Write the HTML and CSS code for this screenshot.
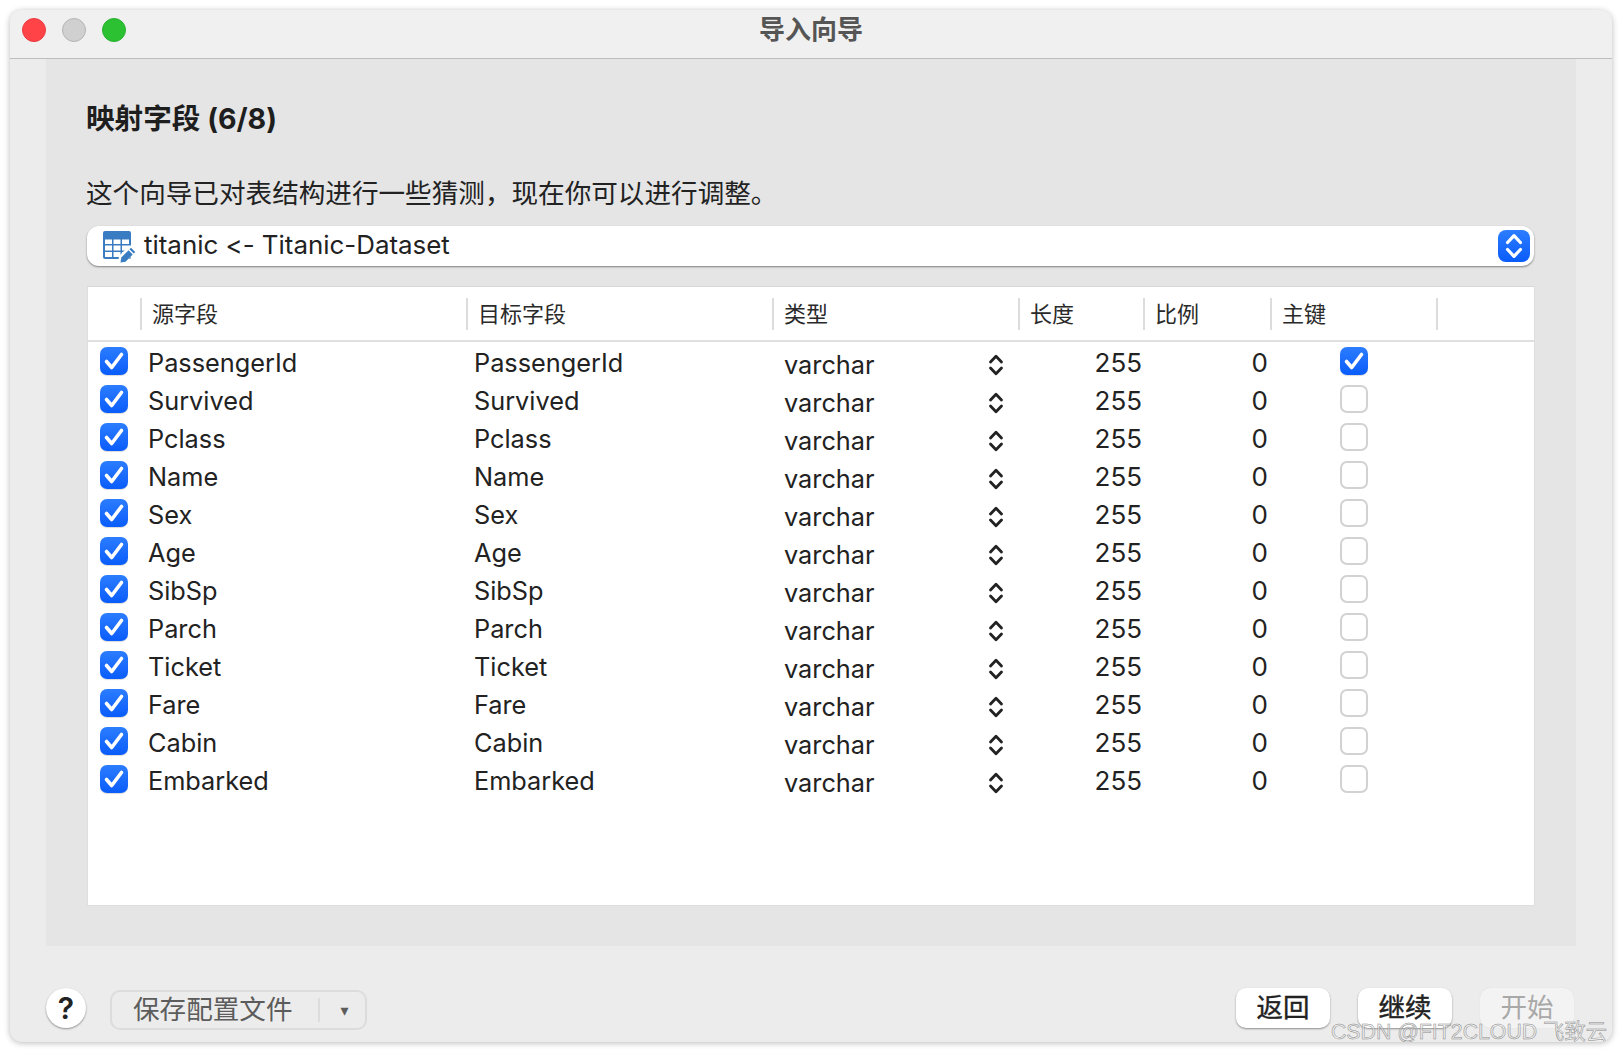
FILE: index.html
```html
<!DOCTYPE html>
<html lang="zh-CN">
<head>
<meta charset="utf-8">
<title>导入向导</title>
<link rel="stylesheet" href="styles.css">
</head>
<body>
<svg class="defs" width="0" height="0" aria-hidden="true">
  <symbol id="tick" viewBox="0 0 28 28"><path d="M6.500 14.500l5.200 6L21.500 7.500" fill="none" stroke="#fff" stroke-width="3.600" stroke-linecap="round" stroke-linejoin="round"/></symbol>
  <symbol id="updown" viewBox="0 0 16 24"><path d="M2.500 9L8 3.200 13.500 9M2.500 15L8 20.800 13.500 15" fill="none" stroke="currentColor" stroke-width="2.800" stroke-linecap="round" stroke-linejoin="round"/></symbol>
</svg>
<div class="window">
  <header class="titlebar">
    <div class="lights"><i class="light red"></i><i class="light grey"></i><i class="light green"></i></div>
    <div class="wintitle">导入向导</div>
  </header>
  <main class="panel">
    <h1 class="heading">映射字段 (6/8)</h1>
    <p class="intro">这个向导已对表结构进行一些猜测，现在你可以进行调整。</p>
    <div class="select">
      <svg class="tableicon" width="32" height="32" viewBox="0 0 32 32">
        <rect x="0" y="0" width="28" height="28" rx="2" fill="#3a7cc2"/>
        <path d="M2 8.500h7v4.500H2zM10.500 8.500h7v4.500h-7zM19 8.500h7v4.500h-7zM2 14.500h7v5H2zM10.500 14.500h7v5h-7zM19 14.500h7v5h-7zM2 21h7v5H2zM10.500 21h7v5h-7zM19 21h7v5h-7z" fill="#fff"/>
        <path d="M15 33l1-8L27 14l6 6-11 12z" fill="#fff"/>
        <path d="M17.500 31.500l.8-5 7.200-7.200 4.200 4.200-7.200 7.200zM26.500 18.300l1.500-1.500 4.200 4.200-1.500 1.500z" fill="#3a7cc2"/>
      </svg>
      <span class="selecttext">titanic &lt;- Titanic-Dataset</span>
      <span class="stepper"><svg width="22" height="28" viewBox="0 0 16 24"><use href="#updown"/></svg></span>
    </div>
    <section class="table">
      <div class="thead">
        <div class="th"></div>
        <div class="th sep">源字段</div>
        <div class="th sep">目标字段</div>
        <div class="th sep">类型</div>
        <div class="th sep">长度</div>
        <div class="th sep">比例</div>
        <div class="th sep">主键</div>
        <div class="th sep"></div>
      </div>
      <div class="row"><span class="cb on"><svg><use href="#tick"/></svg></span><span class="src">PassengerId</span><span class="dst">PassengerId</span><span class="type"><span>varchar</span><svg class="arrows"><use href="#updown"/></svg></span><span class="len">255</span><span class="scale">0</span><span class="pk"><span class="cb on"><svg><use href="#tick"/></svg></span></span></div>
      <div class="row"><span class="cb on"><svg><use href="#tick"/></svg></span><span class="src">Survived</span><span class="dst">Survived</span><span class="type"><span>varchar</span><svg class="arrows"><use href="#updown"/></svg></span><span class="len">255</span><span class="scale">0</span><span class="pk"><span class="cb"></span></span></div>
      <div class="row"><span class="cb on"><svg><use href="#tick"/></svg></span><span class="src">Pclass</span><span class="dst">Pclass</span><span class="type"><span>varchar</span><svg class="arrows"><use href="#updown"/></svg></span><span class="len">255</span><span class="scale">0</span><span class="pk"><span class="cb"></span></span></div>
      <div class="row"><span class="cb on"><svg><use href="#tick"/></svg></span><span class="src">Name</span><span class="dst">Name</span><span class="type"><span>varchar</span><svg class="arrows"><use href="#updown"/></svg></span><span class="len">255</span><span class="scale">0</span><span class="pk"><span class="cb"></span></span></div>
      <div class="row"><span class="cb on"><svg><use href="#tick"/></svg></span><span class="src">Sex</span><span class="dst">Sex</span><span class="type"><span>varchar</span><svg class="arrows"><use href="#updown"/></svg></span><span class="len">255</span><span class="scale">0</span><span class="pk"><span class="cb"></span></span></div>
      <div class="row"><span class="cb on"><svg><use href="#tick"/></svg></span><span class="src">Age</span><span class="dst">Age</span><span class="type"><span>varchar</span><svg class="arrows"><use href="#updown"/></svg></span><span class="len">255</span><span class="scale">0</span><span class="pk"><span class="cb"></span></span></div>
      <div class="row"><span class="cb on"><svg><use href="#tick"/></svg></span><span class="src">SibSp</span><span class="dst">SibSp</span><span class="type"><span>varchar</span><svg class="arrows"><use href="#updown"/></svg></span><span class="len">255</span><span class="scale">0</span><span class="pk"><span class="cb"></span></span></div>
      <div class="row"><span class="cb on"><svg><use href="#tick"/></svg></span><span class="src">Parch</span><span class="dst">Parch</span><span class="type"><span>varchar</span><svg class="arrows"><use href="#updown"/></svg></span><span class="len">255</span><span class="scale">0</span><span class="pk"><span class="cb"></span></span></div>
      <div class="row"><span class="cb on"><svg><use href="#tick"/></svg></span><span class="src">Ticket</span><span class="dst">Ticket</span><span class="type"><span>varchar</span><svg class="arrows"><use href="#updown"/></svg></span><span class="len">255</span><span class="scale">0</span><span class="pk"><span class="cb"></span></span></div>
      <div class="row"><span class="cb on"><svg><use href="#tick"/></svg></span><span class="src">Fare</span><span class="dst">Fare</span><span class="type"><span>varchar</span><svg class="arrows"><use href="#updown"/></svg></span><span class="len">255</span><span class="scale">0</span><span class="pk"><span class="cb"></span></span></div>
      <div class="row"><span class="cb on"><svg><use href="#tick"/></svg></span><span class="src">Cabin</span><span class="dst">Cabin</span><span class="type"><span>varchar</span><svg class="arrows"><use href="#updown"/></svg></span><span class="len">255</span><span class="scale">0</span><span class="pk"><span class="cb"></span></span></div>
      <div class="row"><span class="cb on"><svg><use href="#tick"/></svg></span><span class="src">Embarked</span><span class="dst">Embarked</span><span class="type"><span>varchar</span><svg class="arrows"><use href="#updown"/></svg></span><span class="len">255</span><span class="scale">0</span><span class="pk"><span class="cb"></span></span></div>
    </section>
  </main>
  <footer class="footer">
    <button class="help">?</button>
    <div class="profile"><span class="profilelabel">保存配置文件</span><span class="profilearrow">▾</span></div>
    <div class="spacer"></div>
    <button class="btn">返回</button>
    <button class="btn">继续</button>
    <button class="btn disabled">开始</button>
  </footer>
  <div class="watermark">CSDN @FIT2CLOUD 飞致云</div>
</div>
</body>
</html>
```
FILE: styles.css
```css
* { box-sizing: border-box; }
html, body { margin: 0; height: 100%; }
body {
  width: 1622px;
  height: 1052px;
  padding: 10px;
  background: #fff;
  overflow: hidden;
  font-family: Inter, "Noto Sans CJK SC", sans-serif;
  font-variant-ligatures: none;
  font-feature-settings: "calt" 0;
  color: #222;
}
.defs { position: absolute; }
.window {
  position: relative;
  width: 1602px;
  height: 1032px;
  border-radius: 12px;
  background: #ececec;
  box-shadow: 0 1px 6px rgba(0,0,0,.28);
  display: flex;
  flex-direction: column;
  overflow: hidden;
}
.titlebar {
  height: 49px;
  flex: none;
  padding-top: 1px;
  background: #f0f0f0;
  border-bottom: 1px solid #bdbdbd;
  position: relative;
  display: flex;
  align-items: flex-start;
  justify-content: center;
}
.lights {
  position: absolute;
  left: 12px;
  top: 8px;
  display: flex;
  gap: 16px;
}
.light { width: 24px; height: 24px; border-radius: 50%; display: block; }
.red { background: #ff4347; border: 1px solid #ea3a3e; }
.grey { background: #d0d0d0; border: 1px solid #b4b4b4; }
.green { background: #2bc133; border: 1px solid #27b02f; }
.wintitle {
  font-family: "Noto Sans CJK SC", sans-serif;
  font-size: 26px;
  line-height: 34px;
  font-weight: 700;
  color: #555;
}
.panel {
  width: 1530px;
  height: 887px;
  flex: none;
  margin-left: 36px;
  padding: 42px 42px 40px 41px;
  background: #e5e5e5;
}
.heading {
  margin: 0 0 0 -1px;
  font-size: 28.6px;
  line-height: 36px;
  font-weight: 700;
  color: #1e1e1e;
}
.intro {
  margin: 38px 0 0 -1px;
  font-size: 26.6px;
  line-height: 36px;
  color: #222;
  white-space: nowrap;
}
.select {
  margin-top: 15px;
  height: 40px;
  width: 1447px;
  background: #fff;
  border-radius: 12px;
  box-shadow: 0 1px 2px rgba(0,0,0,.45);
  display: flex;
  align-items: center;
  padding-left: 16px;
  padding-right: 4px;
}
.tableicon { flex: none; overflow: visible; margin-top: 2px; }
.selecttext {
  margin-left: 9px;
  font-size: 25.9px;
  line-height: 36px;
  color: #222;
  flex: 1;
  margin-top: -2px;
}
.stepper {
  width: 32px;
  height: 32px;
  border-radius: 8px;
  background: linear-gradient(#2c7dff, #0a5cfb);
  color: #fff;
  display: flex;
  align-items: center;
  justify-content: center;
}
.table {
  margin-top: 20px;
  width: 1448px;
  height: 620px;
  background: #fff;
  border: 1px solid #dedede;
  border-top-color: #d8d8d8;
}
.thead, .row {
  display: grid;
  grid-template-columns: 52px 326px 306px 246px 125px 127px 166px 1fr;
}
.thead {
  height: 55px;
  border-bottom: 2px solid #e0e0e0;
  padding-top: 11px;
}
.th {
  height: 32px;
  font-size: 22px;
  line-height: 33px;
  color: #2a2a2a;
  padding-left: 10px;
}
.sep { border-left: 2px solid #dcdcdc; }
.row {
  height: 38px;
  grid-template-rows: 38px;
  align-items: center;
  font-size: 25.3px;
  line-height: 30px;
  color: #222;
}
.src, .dst { padding-left: 8px; padding-top: 4px; }
.type {
  padding-left: 12px;
  padding-right: 14px;
  padding-top: 8px;
  display: flex;
  justify-content: space-between;
  align-items: center;
}
.arrows { width: 16px; height: 24px; color: #222; }
.len { text-align: right; padding-right: 1px; padding-top: 4px; font-size: 26px; }
.scale { text-align: right; padding-right: 2px; padding-top: 4px; font-size: 26px; }
.pk { padding-left: 70px; display: flex; }
.cb {
  display: block;
  width: 28px;
  height: 28px;
  border-radius: 7px;
  background: #fff;
  border: 2px solid #d2d2d2;
  margin-left: 12px;
}
.pk .cb { margin-left: 0; }
.cb.on {
  border: 0;
  background: linear-gradient(#2c7dff, #0a5cfb);
  box-shadow: 0 1px 1px rgba(0,0,0,.15);
}
.cb svg { display: block; width: 28px; height: 28px; }
.footer {
  flex: 1;
  display: flex;
  align-items: flex-start;
  padding: 42px 38px 0 36px;
}
.spacer { flex: 1; }
.help {
  width: 40px;
  height: 40px;
  padding: 0;
  border: 0;
  border-radius: 50%;
  background: #fff;
  box-shadow: 0 1px 2px rgba(0,0,0,.4);
  font: 600 30px/40px Inter, sans-serif;
  color: #222;
}
.profile {
  width: 257px;
  height: 40px;
  margin-left: 24px;
  margin-top: 2px;
  border: 2px solid #dcdcdc;
  border-radius: 10px;
  display: flex;
  align-items: center;
  color: #5c5c5c;
}
.profilelabel {
  width: 206px;
  padding-left: 21px;
  font-size: 26.6px;
  line-height: 36px;
  margin-top: -3px;
  white-space: nowrap;
}
.profilearrow {
  border-left: 2px solid #dcdcdc;
  height: 24px;
  flex: 1;
  padding: 1px 0 0 4px;
  text-align: center;
  font-size: 16px;
  line-height: 24px;
  font-family: "DejaVu Sans", sans-serif;
}
.btn {
  width: 94px;
  height: 40px;
  padding: 0 0 5px;
  margin-left: 28px;
  border: 0;
  border-radius: 10px;
  background: #fff;
  box-shadow: 0 1px 2px rgba(0,0,0,.4);
  font: 400 26.5px/34px "Noto Sans CJK SC", sans-serif;
  -webkit-text-stroke: .4px #222;
  color: #222;
}
.btn:first-of-type { margin-left: 0; }
.btn.disabled {
  background: #f3f3f3;
  box-shadow: 0 0 1px rgba(0,0,0,.12);
  color: #a8a8a8;
  -webkit-text-stroke: 0;
}
.watermark {
  position: absolute;
  right: 5px;
  bottom: -4px;
  font-size: 21.3px;
  line-height: 28px;
  white-space: nowrap;
  font-family: "Liberation Sans", "Noto Sans CJK SC", sans-serif;
  color: rgba(240,240,240,.5);
  -webkit-text-stroke: .5px #8a8a8a;
}
```
